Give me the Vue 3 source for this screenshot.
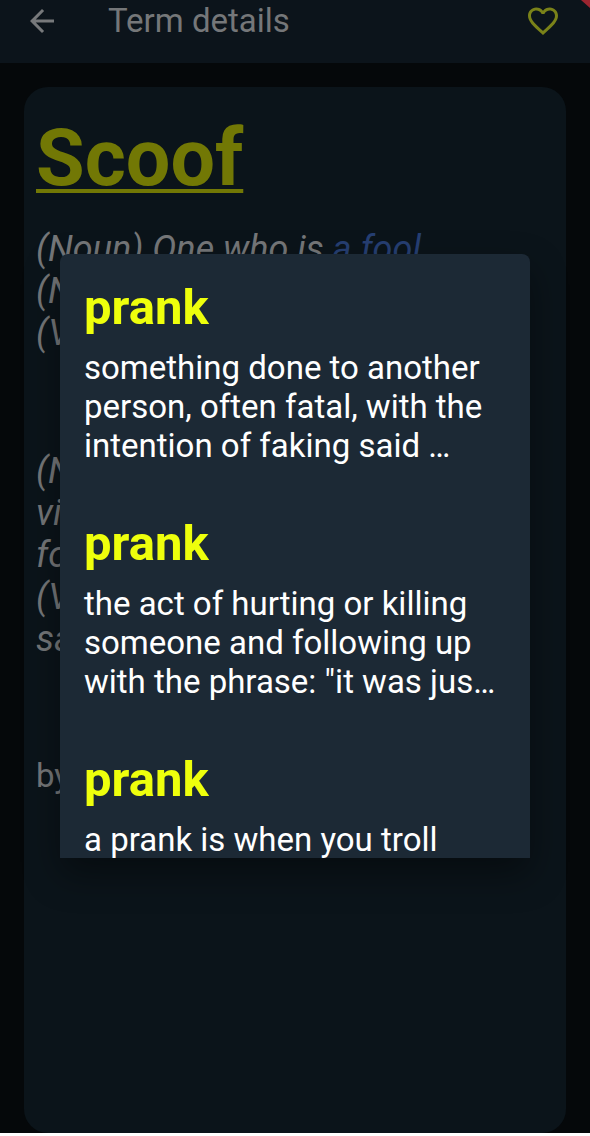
<script setup>
const opening = ['(N', '(V']
const examples = ['(N', 'vi', 'fo', '(V', 'sa']

const definitions = [
  { id: 1, term: 'prank', text: 'something done to another person, often fatal, with the intention of faking said …' },
  { id: 2, term: 'prank', text: 'the act of hurting or killing someone and following up with the phrase: "it was jus…' },
  { id: 3, term: 'prank', text: 'a prank is when you troll' }
]
</script>

<template>
  <div class="screen">
    <header class="bar">
      <button class="icon-button" type="button" aria-label="Back">
        <svg width="36" height="36" viewBox="0 0 24 24" fill="currentColor" aria-hidden="true">
          <path d="M20 11H7.83l5.59-5.59L12 4l-8 8 8 8 1.41-1.41L7.83 13H20v-2z" />
        </svg>
      </button>
      <h1 class="bar-title">Term details</h1>
      <button class="icon-button favorite" type="button" aria-label="Favorite">
        <svg width="36" height="36" viewBox="0 0 24 24" fill="currentColor" aria-hidden="true">
          <path d="M16.5 3c-1.74 0-3.41.81-4.5 2.09C10.91 3.81 9.24 3 7.5 3 4.42 3 2 5.42 2 8.5c0 3.78 3.4 6.86 8.55 11.54L12 21.35l1.45-1.32C18.6 15.36 22 12.28 22 8.5 22 5.42 19.58 3 16.5 3zm-4.4 15.55l-.1.1-.1-.1C7.14 14.24 4 11.39 4 8.5 4 6.5 5.5 5 7.5 5c1.54 0 3.04.99 3.57 2.36h1.87C13.46 5.99 14.96 5 16.5 5c2 0 3.5 1.5 3.5 3.5 0 2.89-3.14 5.74-7.9 10.05z" />
        </svg>
      </button>
      <span class="ribbon" aria-hidden="true"></span>
    </header>

    <main class="content">
      <article class="card">
        <h2 class="term">Scoof</h2>
        <div class="lines">
          <p>(Noun) One who is <a href="#fool">a fool</a></p>
          <p v-for="(line, i) in opening" :key="i">{{ line }}</p>
        </div>
        <div class="lines">
          <p v-for="(line, i) in examples" :key="i">{{ line }}</p>
        </div>
        <p class="author">by</p>
      </article>
    </main>

    <div class="overlay">
      <section class="dialog" role="dialog" aria-label="Definitions">
        <article v-for="item in definitions" :key="item.id" class="definition">
          <h3>{{ item.term }}</h3>
          <p>{{ item.text }}</p>
        </article>
      </section>
    </div>
  </div>
</template>

<style>
body {
  margin: 0;
  background: #fff;
}
</style>

<style scoped>
.screen {
  position: relative;
  display: flex;
  flex-direction: column;
  min-height: calc(100vh - 3px);
  background: #05080a;
  color: #757779;
  font-family: Roboto, "Noto Sans", sans-serif;
}
h1, h2, h3, p {
  margin: 0;
}
.bar {
  position: relative;
  display: flex;
  align-items: flex-start;
  height: 63px;
  padding: 3px 29px 0 24px;
  box-sizing: border-box;
  background: #0c141b;
  overflow: hidden;
}
.icon-button {
  display: flex;
  padding: 0;
  border: 0;
  background: none;
  color: #77797b;
}
.favorite {
  margin-left: auto;
  color: #7a8219;
}
.bar-title {
  margin-left: 48px;
  font-size: 33px;
  line-height: 36px;
  font-weight: 400;
}
.ribbon {
  position: absolute;
  top: 0;
  right: 0;
  width: 9px;
  height: 8px;
  background: #9c2530;
  clip-path: polygon(0 0, 100% 0, 100% 100%);
}
.content {
  flex: 1;
  display: flex;
  padding: 24px 24px 0;
}
.card {
  flex: 1;
  padding: 25px 12px;
  border-radius: 24px;
  background: #0b141a;
}
.term {
  margin-bottom: 24px;
  color: #727805;
  font-size: 79px;
  line-height: 92px;
  font-weight: 700;
  text-decoration: underline;
  text-decoration-thickness: 4px;
  text-underline-offset: 4px;
  text-decoration-skip-ink: none;
}
.lines {
  margin-bottom: 96px;
  font-size: 36px;
  line-height: 42px;
  font-style: italic;
}
.lines a {
  color: #263f72;
  text-decoration: none;
}
.author {
  font-size: 33px;
  line-height: 39px;
}
.overlay {
  position: absolute;
  inset: 0;
  display: flex;
  padding: 254px 60px 275px;
}
.dialog {
  flex: 1;
  display: flex;
  flex-direction: column;
  gap: 50px;
  padding: 25px 24px 0;
  border-radius: 8px 8px 0 0;
  background: #1c2935;
  box-shadow: 0 16px 36px rgba(0, 0, 0, 0.4);
  overflow: hidden;
}
.definition h3 {
  margin-bottom: 11px;
  color: #eeff0c;
  font-size: 49px;
  line-height: 58px;
  font-weight: 700;
}
.definition p {
  color: #fff;
  font-size: 33px;
  line-height: 39px;
}
</style>
